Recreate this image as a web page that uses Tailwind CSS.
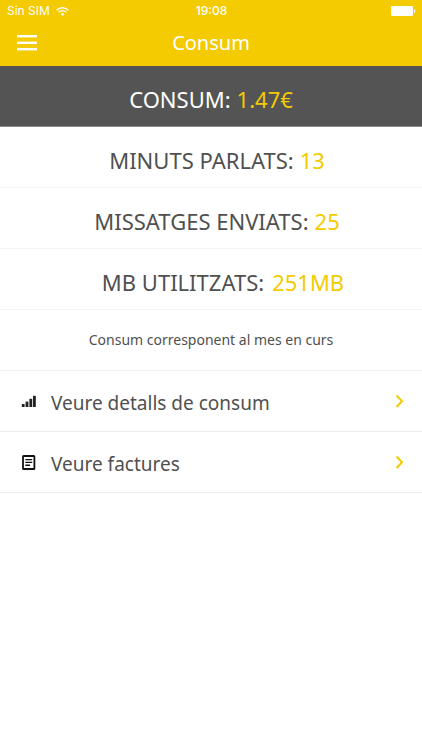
<!DOCTYPE html>
<html lang="ca">

<head>
    <meta charset="UTF-8">
    <meta name="viewport" content="width=device-width, initial-scale=1.0">
    <title>Consum</title>
    <script src="https://cdn.jsdelivr.net/npm/@tailwindcss/browser@4"></script>
</head>

<body class="min-h-screen bg-white font-['Noto_Sans',sans-serif] text-[#505050]">
    <header class="bg-[#f4ca00] text-white">
        <!-- Status bar -->
        <div class="grid h-[22px] grid-cols-3 items-center pr-1.5 pl-[7px] font-['Inter','Liberation_Sans',sans-serif] text-xs">
            <div class="flex items-center gap-1.5">
                <span>Sin SIM</span>
                <svg class="h-[9px] w-[13px]" viewBox="0 0 13 9" fill="none" stroke="currentColor" stroke-width="1.4" aria-hidden="true">
                    <path d="M0.6 3.2C4 0 9 0 12.4 3.2" />
                    <path d="M2.7 5.3C4.8 3.3 8.2 3.3 10.3 5.3" />
                    <path d="M6.5 8.9L4.5 6.9C5.7 5.9 7.3 5.9 8.5 6.9Z" fill="currentColor" stroke="none" />
                </svg>
            </div>
            <time class="text-center font-medium">19:08</time>
            <svg class="h-2.5 w-[25px] justify-self-end" viewBox="0 0 25 10" fill="currentColor" aria-hidden="true">
                <rect width="22" height="10" rx="1.2" />
                <path d="M23 3.2C24.8 3.6 24.8 6.4 23 6.8Z" />
            </svg>
        </div>
        <!-- Title bar -->
        <div class="grid h-11 grid-cols-[40px_1fr_40px] items-center px-[7px] pb-0.5">
            <button type="button" aria-label="Menú" class="flex h-10 items-center justify-center">
                <svg class="h-4 w-5" viewBox="0 0 20 16" fill="currentColor" aria-hidden="true">
                    <rect y="0" width="20" height="2.4" />
                    <rect y="6.6" width="20" height="2.4" />
                    <rect y="13" width="20" height="2.4" />
                </svg>
            </button>
            <h1 class="text-center text-xl">Consum</h1>
        </div>
    </header>

    <main>
        <dl class="text-center text-[22px]">
            <div class="flex h-[61px] items-center justify-center gap-1.5 border-b border-[#8c8c8c] bg-[#545454] pt-1.5">
                <dt class="text-white">CONSUM:</dt>
                <dd class="text-[#f4ca00]">1.47€</dd>
            </div>
            <div class="flex h-[61px] items-center justify-center gap-1.5 border-b border-[#f3f3f3] pt-1.5 pl-3">
                <dt>MINUTS PARLATS:</dt>
                <dd class="text-[#f4ca00]">13</dd>
            </div>
            <div class="flex h-[61px] items-center justify-center gap-1.5 border-b border-[#f3f3f3] pt-1.5 pl-3">
                <dt>MISSATGES ENVIATS:</dt>
                <dd class="text-[#f4ca00]">25</dd>
            </div>
            <div class="flex h-[61px] items-center justify-center gap-2 border-b border-[#f3f3f3] pt-1.5 pl-6">
                <dt>MB UTILITZATS:</dt>
                <dd class="text-[#f4ca00]">251MB</dd>
            </div>
        </dl>
        <p class="flex h-[61px] items-center justify-center border-b border-[#f0f0f0] text-sm">Consum corresponent al mes en curs</p>

        <nav class="text-[19px]">
            <a href="#detalls" class="flex h-[61px] items-center border-b border-[#ebebeb] pr-[17px] pl-[21px]">
                <svg class="h-4 w-[15px]" viewBox="0 0 15 16" fill="#222" aria-hidden="true">
                    <rect x="0.8" y="11" width="2.8" height="3" />
                    <rect x="4.6" y="8.6" width="2.8" height="5.4" />
                    <rect x="8.4" y="5.8" width="2.8" height="8.2" />
                    <rect x="12" y="2.8" width="2.8" height="11.2" />
                </svg>
                <span class="grow pt-1 pl-[15px]">Veure detalls de consum</span>
                <svg class="h-4 w-3" viewBox="0 0 12 16" fill="none" stroke="#f4ca00" stroke-width="2" aria-hidden="true">
                    <path d="M3.6 2.5L9 8.2L3.6 14" />
                </svg>
            </a>
            <a href="#factures" class="flex h-[61px] items-center border-b border-[#ebebeb] pr-[17px] pl-[21px]">
                <svg class="h-4 w-[15px]" viewBox="0 0 15 16" fill="none" stroke="#111" aria-hidden="true">
                    <rect x="2" y="2" width="11.4" height="13" rx="0.6" stroke-width="1.8" />
                    <path d="M4.3 5.6H11.2M4.3 8.4H11.2M4.3 11.2H9" stroke-width="1.4" />
                </svg>
                <span class="grow pt-1 pl-[15px]">Veure factures</span>
                <svg class="h-4 w-3" viewBox="0 0 12 16" fill="none" stroke="#f4ca00" stroke-width="2" aria-hidden="true">
                    <path d="M3.6 2.5L9 8.2L3.6 14" />
                </svg>
            </a>
        </nav>
    </main>
</body>

</html>
